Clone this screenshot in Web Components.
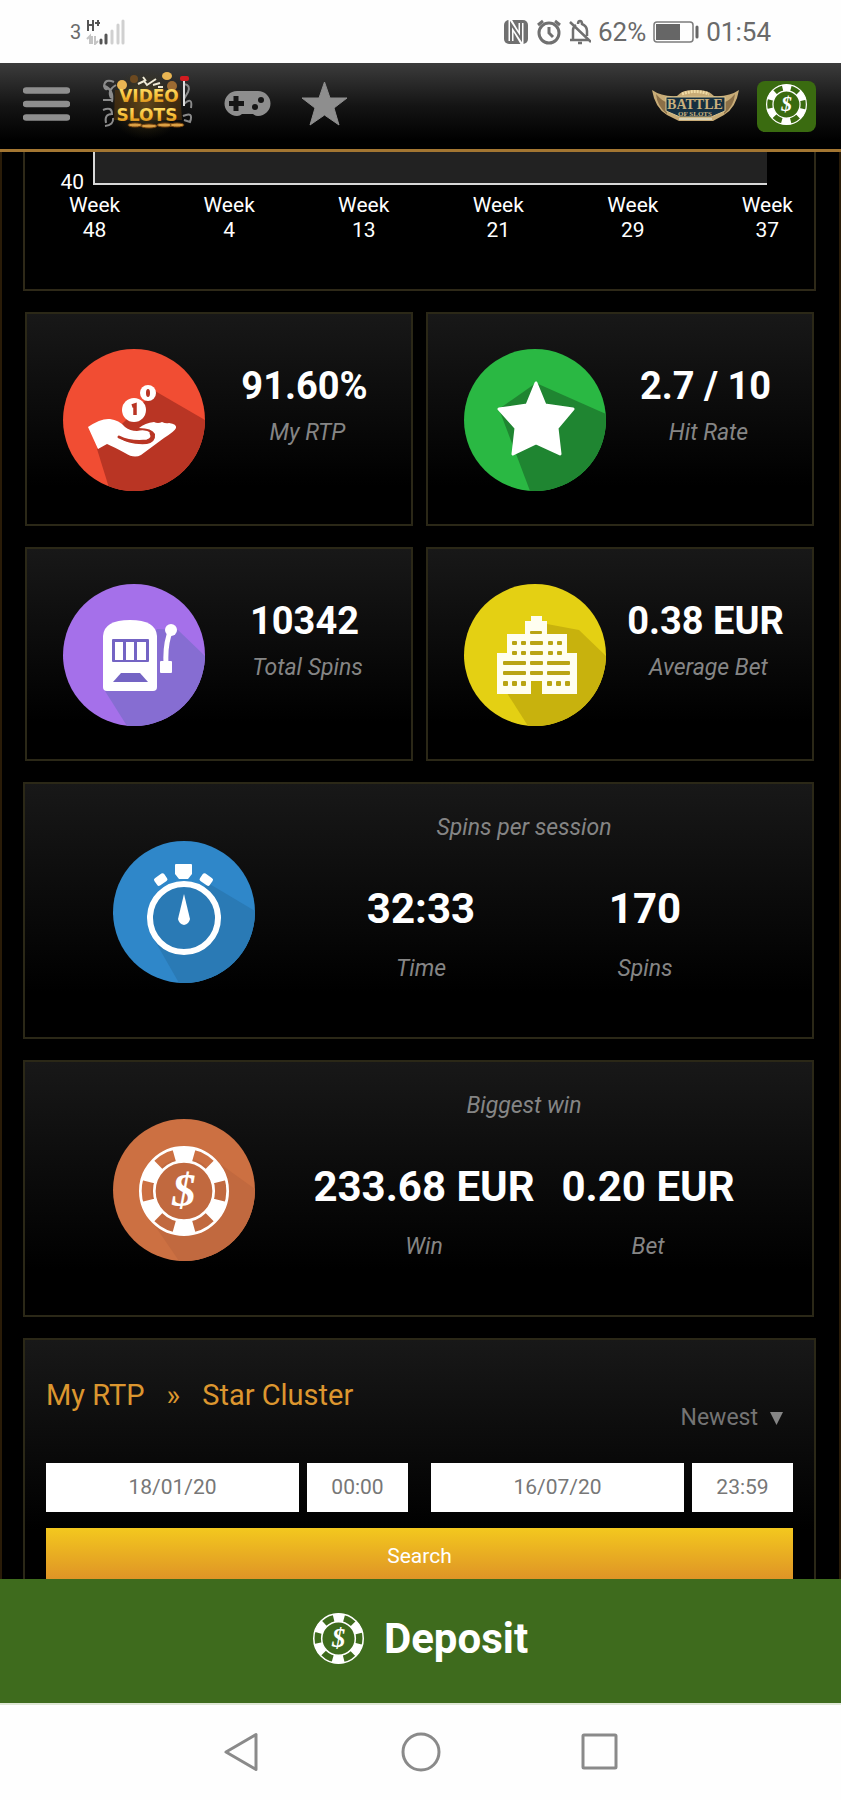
<!DOCTYPE html>
<html lang="en">
<head>
<meta charset="utf-8">
<meta name="viewport" content="width=device-width, initial-scale=1">
<title>Videoslots - My RTP</title>
<style>
  body { margin: 0; background: #000; font-family: Roboto, "Liberation Sans", sans-serif; color: #fff; }
</style>
</head>
<body>
<app-shell>
  <status-bar slot="status"></status-bar>
  <site-header slot="header"></site-header>
  <rtp-chart></rtp-chart>
  <tile-row>
    <stat-tile value="91.60%" label="My RTP"><stat-icon name="hand"></stat-icon></stat-tile>
    <stat-tile value="2.7 / 10" label="Hit Rate"><stat-icon name="star"></stat-icon></stat-tile>
    <stat-tile value="10342" label="Total Spins"><stat-icon name="slot"></stat-icon></stat-tile>
    <stat-tile value="0.38 EUR" label="Average Bet"><stat-icon name="building"></stat-icon></stat-tile>
  </tile-row>
  <pair-card heading="Spins per session" value-a="32:33" label-a="Time" value-b="170" label-b="Spins"><stat-icon name="watch"></stat-icon></pair-card>
  <pair-card heading="Biggest win" value-a="233.68 EUR" label-a="Win" value-b="0.20 EUR" label-b="Bet"><stat-icon name="chip"></stat-icon></pair-card>
  <search-panel></search-panel>
  <deposit-bar slot="deposit"></deposit-bar>
  <system-nav slot="nav"></system-nav>
</app-shell>

<script>
const define = (name, render) => customElements.define(name, class extends HTMLElement {
  connectedCallback() {
    if (this.shadowRoot) return;
    this.attachShadow({ mode: "open" }).innerHTML = render(this);
  }
});

/* Casino chip, centred on 0,0 with radius 50 */
const chip = `
  <g fill="none" stroke="#fff">
    <circle r="48.500" stroke-width="3"/>
    <circle r="33" stroke-width="3"/>
    <circle r="41" stroke-width="16" pathLength="360" stroke-dasharray="31 29" stroke-dashoffset="15.500" transform="rotate(-90)"/>
  </g>
  <text y="17" text-anchor="middle" font-family="Liberation Serif, serif" font-size="52" font-weight="700" font-style="italic" fill="#fff">$</text>`;

const starPoints = "72,34 81,56 109,60 93,79 96,105 72,94 49,105 52,79 35,60 63,56";

const dots = (xs, y, w, h) => xs.map(x => `<rect x="${x}" y="${y}" width="${w}" height="${h}" rx="1"/>`).join("");

const icons = {
  hand: ["#f14d33", "#b93524", "34,100 47,142 142,142 142,71 92,42", `
    <circle cx="71" cy="61" r="12" fill="#fff"/><path d="M69 57l3-1v10" stroke="#b93524" stroke-width="3.500" fill="none"/>
    <circle cx="85" cy="44" r="8" fill="#fff"/><ellipse cx="85" cy="44" rx="2" ry="4" fill="#b93524"/>
    <path fill="#fff" d="M25 78Q38 69 47 70Q56 71 62 78Q67 82 74 82Q83 80 88 84Q91 89 85 92Q67 94 57 89Q65 96 84 95Q93 93 92 85Q89 79 76 79Q82 74 91 73Q95 75 99 73Q103 75 106 74Q114 75 113 79Q112 82 101 89L78 106Q71 110 62 104Q51 98 44 95L35 100Z"/>
    <path d="M56 88Q68 94 84 92Q91 90 88 84" fill="none" stroke="#b93524" stroke-width="3" stroke-linecap="round"/>`],
  star: ["#2ab843", "#1f8531", "72,34 142,65 142,142 66,142 35,60", `
    <polygon points="${starPoints}" fill="#fff" stroke="#fff" stroke-width="3" stroke-linejoin="round"/>`],
  slot: ["#a570ea", "#866dd2", "94,45 115,46 142,72 142,142 64,142 42,107", `
    <path d="M40 52Q41 36 67 36Q93 36 94 52V103Q94 107 90 107H44Q40 107 40 103Z" fill="#fff"/>
    <rect x="49" y="55" width="37" height="23" rx="1" fill="#7464c4"/>
    <g fill="#fff"><rect x="52" y="58" width="8" height="18"/><rect x="63" y="58" width="8" height="18"/><rect x="74" y="58" width="9" height="18"/>
    <circle cx="108" cy="46" r="6"/><rect x="97" y="77" width="12" height="12" rx="1"/></g>
    <path d="M108 46Q102 59 103 79" fill="none" stroke="#fff" stroke-width="5"/>
    <path d="M50 98l8-9h19l8 9z" fill="#7464c4"/>`],
  building: ["#e4d013", "#c8b20d", "83,40 115,46 142,72 142,142 64,142 34,95", `
    <g fill="#fffef0"><rect x="67" y="32" width="11" height="6"/><rect x="61" y="37" width="22" height="15"/><rect x="43" y="50" width="60" height="20"/><path d="M33 69H113V110H78V97H67V110H33Z"/></g>
    <g fill="#b9a413">${dots([66], 47, 12, 3)}${dots([66], 57, 13, 4)}${dots([66], 67, 13, 4)}${dots([48, 57, 84, 93], 57, 5, 4)}${dots([48, 57, 84, 93], 67, 5, 4)}
    ${dots([39, 83], 77, 23, 4)}${dots([39, 83], 87, 23, 4)}${dots([66], 77, 13, 4)}${dots([66], 87, 13, 4)}${dots([39, 48, 57, 83, 92, 101], 97, 5, 5)}</g>`],
  watch: ["#2f87c9", "#2a7ab5", "95,42 142,70 142,142 66,142 42,100", `
    <circle cx="71" cy="77" r="34" fill="#2a7ab5" stroke="#fff" stroke-width="6"/>
    <path d="M62 24Q62 23 63 23H78Q79 23 79 24V33L75 38H66L62 33Z" fill="#fff"/>
    <rect x="-6" y="-5" width="12" height="9" rx="2" transform="translate(48 39) rotate(-35)" fill="#fff"/>
    <rect x="-6" y="-5" width="12" height="9" rx="2" transform="translate(93 39) rotate(35)" fill="#fff"/>
    <path d="M71 53L77 78Q76 83 71 84Q66 83 65 78Z" fill="#fff"/>`],
  chip: ["#cc7042", "#c1693f", "103,42 142,70 142,142 66,142 40,104", `
    <circle cx="71" cy="72" r="33" fill="#c1693f"/><g transform="translate(71 72) scale(.9)">${chip}</g>`]
};

define("chip-icon", () => `
  <style>:host { display: block; width: 51px; height: 51px; } svg { display: block; width: 100%; height: 100%; }</style>
  <svg viewBox="-50 -50 100 100" aria-hidden="true">${chip}</svg>`);

define("stat-icon", el => {
  const [base, shade, shadow, art] = icons[el.getAttribute("name")];
  return `
  <style>:host { display: block; width: 142px; height: 142px; flex: none; } svg { display: block; }</style>
  <svg width="142" height="142" viewBox="0 0 142 142" aria-hidden="true">
    <clipPath id="disc"><circle cx="71" cy="71" r="71"/></clipPath>
    <g clip-path="url(#disc)"><rect width="142" height="142" fill="${base}"/><polygon points="${shadow}" fill="${shade}"/>${art}</g>
  </svg>`;
});

define("app-shell", () => `
  <style>
    :host { display: flex; flex-direction: column; height: 100vh; }
    main { flex: 1; min-height: 0; overflow-y: auto; scrollbar-width: none; box-sizing: border-box;
      display: flex; flex-direction: column; gap: 21px; padding: 0 23px 0 21px;
      border: solid #2a1c08; border-width: 0 2px; background: #000; }
    ::slotted(*) { flex: none; }
  </style>
  <slot name="status"></slot><slot name="header"></slot>
  <main><slot></slot></main>
  <slot name="deposit"></slot><slot name="nav"></slot>`);

define("status-bar", () => `
  <style>
    :host { display: flex; align-items: center; justify-content: space-between; height: 63px; padding: 0 70px; background: #fefefe; color: #6a6a6a; font-size: 26px; line-height: 30px; }
    div { display: flex; align-items: center; }
    svg { display: block; }
    .carrier { font-size: 20px; gap: 5px; }
    .right { gap: 7px; }
  </style>
  <div class="carrier"><span>3</span>
    <svg width="40" height="26" viewBox="0 0 40 26" aria-label="H+ signal">
      <path d="M2 1V12M7 1V12M2 6H7M9 4H14M12 1V7" stroke="#555" stroke-width="2" fill="none"/>
      <path d="M4 25V17L1 20M6 17V25M9 17V25L12 22" stroke="#c4c4c4" stroke-width="2" fill="none"/>
      <path d="M15 21V24M20 16V24" stroke="#555" stroke-width="3" stroke-linecap="round"/>
      <path d="M26 12V24M32 6V24M37 2V24" stroke="#d0d0d0" stroke-width="3" stroke-linecap="round"/>
    </svg></div>
  <div class="right">
    <svg width="26" height="26" viewBox="0 0 26 26" aria-label="NFC"><rect x="1" y="1" width="24" height="24" rx="5" fill="#707070"/><path d="M8 22V4L18 21V4" fill="none" stroke="#fefefe" stroke-width="5"/><path d="M8 24V5L18 20V2" fill="none" stroke="#707070" stroke-width="2"/></svg>
    <svg width="26" height="26" viewBox="0 0 26 26" aria-label="Alarm"><circle cx="13" cy="14" r="10" fill="none" stroke="#707070" stroke-width="3"/><path d="M13 8V14L17 18M2 6L7 2M24 6L19 2" fill="none" stroke="#707070" stroke-width="3"/></svg>
    <svg width="22" height="26" viewBox="1 0 22 26" aria-label="Muted"><path d="M2 21H20M5 20V11Q5 8 8 6M10 5Q10 2 12 2Q14 2 14 5Q19 7 19 12V17M2 3L23 23M10 24H14" fill="none" stroke="#707070" stroke-width="2.500"/></svg>
    <span>62%</span>
    <svg width="46" height="22" viewBox="0 0 46 22" aria-label="Battery"><rect x="1" y="1" width="39" height="20" rx="3" fill="none" stroke="#7c7c7c" stroke-width="1.500"/><rect x="3" y="3" width="24" height="16" fill="#666"/><path d="M44 6V16" stroke="#666" stroke-width="3" stroke-linecap="round"/></svg>
    <span>01:54</span>
  </div>`);

define("site-header", () => `
  <style>
    :host { display: flex; align-items: center; justify-content: space-between; height: 86px; padding: 0 25px 0 23px;
      border-bottom: 3px solid #a37632; background: linear-gradient(#3c3c3c, #141414 50%, #000 90%); }
    nav, div { display: flex; align-items: center; }
    nav { gap: 30px; padding-bottom: 4px; }
    div { gap: 18px; }
    svg { display: block; }
    a { display: block; }
    button { padding: 0; border: 0; background: none; cursor: pointer; }
    .deposit { display: grid; place-items: start center; width: 59px; height: 51px; padding-top: 3px; border-radius: 8px; background: #3a6b10; }
    chip-icon { width: 41px; height: 41px; }
  </style>
  <nav aria-label="Main">
    <button aria-label="Menu"><svg width="47" height="34" viewBox="0 0 47 34"><path d="M3 3.500H44M3 17H44M3 30.500H44" stroke="#8e8e8e" stroke-width="6.500" stroke-linecap="round"/></svg></button>
    <a href="#home" aria-label="Video Slots">
      <svg width="94" height="72" viewBox="0 0 94 72">
        <defs>
          <linearGradient id="gold" x2="0" y2="1"><stop offset="0" stop-color="#ffe978"/><stop offset=".6" stop-color="#f6b62c"/><stop offset="1" stop-color="#b87319"/></linearGradient>
          <radialGradient id="glow"><stop offset="0" stop-color="#8a7434" stop-opacity=".7"/><stop offset="1" stop-color="#3d3414" stop-opacity="0"/></radialGradient>
        </defs>
        <ellipse cx="46" cy="36" rx="38" ry="36" fill="url(#glow)"/>
        <g fill="none" stroke="#8b8b8b" stroke-width="2"><path d="M14 14Q5 10 4 18Q5 23 9 20M16 17Q7 22 11 30M5 18Q14 22 12 34M3 32H12M3 42Q12 38 12 46Q4 46 6 55M13 50Q14 57 5 58M84 16Q91 17 88 24L84 31M84 36Q93 28 91 40M83 48Q94 43 90 54L84 52"/></g>
        <g fill="#e9b553"><ellipse cx="67" cy="8" rx="5" ry="4"/><circle cx="22" cy="17" r="5"/><circle cx="72" cy="18" r="5" fill="#9c6b32"/><circle cx="34" cy="11" r="4" fill="#6c4920"/></g>
        <path d="M38 16L44 13L47 17L56 11M43 9L46 13M53 17L60 15M58 19L63 19" stroke="#eee9d5" stroke-width="2" fill="none"/>
        <path d="M15 22H80L82 52H14Z" fill="#5b380c" opacity=".55"/>
        <g font-family="DejaVu Sans, sans-serif" font-weight="700" fill="url(#gold)">
          <text x="49" y="34" font-size="17" text-anchor="middle">VIDEO</text>
          <text x="47" y="53" font-size="17" text-anchor="middle">SLOTS</text>
        </g>
        <g fill="#dba044" stroke="#71400e"><ellipse cx="35" cy="57" rx="7" ry="2"/><ellipse cx="49" cy="58" rx="8" ry="2"/><ellipse cx="65" cy="57" rx="8" ry="2"/><ellipse cx="77" cy="57" rx="7" ry="2"/></g>
        <path d="M84 13V38" stroke="#ddd" stroke-width="2"/><rect x="80" y="8" width="9" height="5" rx="2" fill="#d21b20"/>
      </svg></a>
    <a href="#games" aria-label="Games"><svg width="47" height="26" viewBox="0 0 47 26"><path d="M13 0H34A12.500 12.500 0 0 1 34 25Q31 25 29 23H18Q16 25 13 25A12.500 12.500 0 0 1 13 0Z" fill="#8e8e8e"/><path d="M12 5V20M5 12.500H20" stroke="#151515" stroke-width="5"/><circle cx="37" cy="9" r="3" fill="#151515"/><circle cx="31" cy="16" r="3" fill="#151515"/></svg></a>
    <a href="#favourites" aria-label="Favourites"><svg width="47" height="46" viewBox="0 0 47 46"><path d="M23.500 1L29 17H46L33 27L38 44L23.500 34L9 44L14 27L1 17H18Z" fill="#8e8e8e" stroke="#8e8e8e" stroke-linejoin="round"/></svg></a>
  </nav>
  <div>
    <a href="#battle" aria-label="Battle of Slots">
      <svg width="87" height="34" viewBox="0 0 87 34">
        <path d="M0 1Q10 8 25 7Q31 0 43 1Q56 0 62 7Q77 8 87 1Q84 19 72 26L61 32H27L15 26Q3 19 0 1Z" fill="#c8ac77"/>
        <path d="M4 5Q11 13 15 13V25Q5 17 4 5ZM83 5Q76 13 72 13V25Q82 17 83 5Z" fill="#8c7048"/>
        <path d="M14 8H73V22L59 28H28L14 22Z" fill="#152f40" stroke="#dac591"/>
        <path d="M30 5Q43 0 57 5" stroke="#f1dca6" stroke-width="3" stroke-dasharray="2 1" fill="none"/>
        <g font-family="Liberation Serif, serif" font-weight="700" fill="#cbb17d" text-anchor="middle"><text x="43" y="20" font-size="14">BATTLE</text><text x="43" y="27" font-size="7">OF SLOTS</text></g>
        <path d="M27 30H60" stroke="#d8d1b5" stroke-width="2"/>
      </svg></a>
    <button class="deposit" aria-label="Deposit"><chip-icon></chip-icon></button>
  </div>`);

define("rtp-chart", () => `
  <style>
    :host { display: block; padding-bottom: 46px; border: solid #2e2918; border-width: 0 2px 2px; font-size: 21px; line-height: 25px; }
    .plot { display: flex; align-items: flex-end; gap: 9px; padding-right: 47px; }
    .tick { width: 59px; text-align: right; margin-bottom: -10px; }
    .area { flex: 1; height: 31px; border: solid #d8d8d8; border-width: 0 0 2px 2px; background: #222; }
    .weeks { display: flex; justify-content: space-between; padding: 8px 21px 0 44px; text-align: center; }
  </style>
  <div class="plot"><span class="tick">40</span><div class="area"></div></div>
  <div class="weeks">${[48, 4, 13, 21, 29, 37].map(w => `<span>Week<br>${w}</span>`).join("")}</div>`);

define("tile-row", () => `
  <style>:host { display: grid; grid-template-columns: 1fr 1fr; gap: 21px 13px; padding: 0 2px; }</style><slot></slot>`);

const panel = `border: 2px solid #2b2817; background: linear-gradient(#181818, #000 82%);`;
const caption = `color: #858585; font-size: 23px; line-height: 30px; font-style: italic;`;

define("stat-tile", el => `
  <style>
    :host { display: flex; align-items: flex-start; padding: 35px 7px 33px 36px; ${panel} }
    div { flex: 1; padding-top: 15px; text-align: center; white-space: nowrap; }
    strong { display: block; font-size: 38px; line-height: 44px; margin-bottom: 10px; }
    span { ${caption} display: block; padding-left: 6px; }
  </style>
  <slot></slot>
  <div><strong>${el.getAttribute("value")}</strong><span>${el.getAttribute("label")}</span></div>`);

define("pair-card", el => {
  const a = n => el.getAttribute(n);
  return `
  <style>
    :host { display: flex; align-items: center; padding: 29px 64px 53px 88px; margin-right: 2px; justify-content: space-between; ${panel} }
    ::slotted(*) { margin-top: 26px; }
    section { width: 448px; text-align: center; white-space: nowrap; }
    h2, p { ${caption} margin: 0; font-weight: 400; }
    .grid { display: grid; grid-template-columns: auto auto; margin-top: 41px; }
    strong { display: block; font-size: 42px; line-height: 50px; margin-bottom: 20px; }
  </style>
  <slot></slot>
  <section>
    <h2>${a("heading")}</h2>
    <div class="grid">
      <div><strong>${a("value-a")}</strong><p>${a("label-a")}</p></div>
      <div><strong>${a("value-b")}</strong><p>${a("label-b")}</p></div>
    </div>
  </section>`;
});

define("search-panel", () => `
  <style>
    :host { display: block; padding: 37px 21px 20px 21px; border: 2px solid #2b2817; background: linear-gradient(#181818, #000 190px); }
    header { display: flex; justify-content: space-between; align-items: flex-start; }
    nav { display: flex; gap: 22px; font-size: 29px; line-height: 36px; color: #dc962f; }
    a { color: inherit; text-decoration: none; }
    label.sort { display: flex; align-items: center; gap: 12px; margin-top: 26px; padding-right: 10px; }
    select { appearance: none; field-sizing: content; border: 0; padding: 0; margin: 0; background: none; color: #747474; font: 23px/30px Roboto, sans-serif; }
    .fields { display: grid; grid-template-columns: minmax(0, 253fr) minmax(0, 116fr) minmax(0, 253fr) minmax(0, 101fr); margin-top: 30px; gap: 8px; }
    .fields input:nth-child(2) { margin-right: 15px; }
    input { min-width: 0; height: 49px; box-sizing: border-box; border: 0; border-radius: 0; padding: 0 0 2px; background: #fff; color: #777; text-align: center; font: 21px Roboto, sans-serif; }
    button { display: block; width: 100%; height: 56px; margin-top: 16px; border: 0; background: linear-gradient(#f3c81e, #dd8f27); color: #fff; font: 21px Roboto, sans-serif; }
    svg { display: block; }
  </style>
  <header>
    <nav aria-label="Breadcrumb"><a href="#rtp">My RTP</a><span>»</span><a href="#star-cluster">Star Cluster</a></nav>
    <label class="sort"><select aria-label="Sort order"><option>Newest</option><option>Oldest</option></select>
      <svg width="13" height="13" viewBox="0 0 13 13" aria-hidden="true"><path d="M0 0H13L6.500 13Z" fill="#858585"/></svg></label>
  </header>
  <div class="fields">
    <input aria-label="From date" value="18/01/20"><input aria-label="From time" value="00:00">
    <input aria-label="To date" value="16/07/20"><input aria-label="To time" value="23:59">
  </div>
  <button>Search</button>`);

define("deposit-bar", () => `
  <style>
    :host { display: block; }
    button { display: flex; align-items: center; justify-content: center; gap: 20px; width: 100%; height: 124px; padding: 0 0 6px; border: 0; background: #3e6b1d; color: #fff; font: 700 42px/50px Roboto, sans-serif; }
    span { padding-top: 2px; }
  </style>
  <button><chip-icon></chip-icon><span>Deposit</span></button>`);

define("system-nav", () => `
  <style>
    :host { display: flex; align-items: center; justify-content: center; gap: 131px; height: 93px; padding-bottom: 2px; border-top: 2px solid #dfe7d6; background: #fefefe; }
    button { display: grid; place-items: center; width: 48px; height: 48px; padding: 0; border: 0; background: none; }
    svg { fill: none; stroke: #8a8a8a; stroke-width: 3; stroke-linejoin: round; }
  </style>
  <button aria-label="Back"><svg width="40" height="40" viewBox="0 0 40 40"><path d="M34 2.500V37.500L4 20Z"/></svg></button>
  <button aria-label="Home"><svg width="40" height="40" viewBox="0 0 40 40"><circle cx="20" cy="20" r="18"/></svg></button>
  <button aria-label="Recent apps"><svg width="40" height="40" viewBox="0 0 40 40"><rect x="3" y="3" width="33" height="33" rx="1"/></svg></button>`);
</script>
</body>
</html>
